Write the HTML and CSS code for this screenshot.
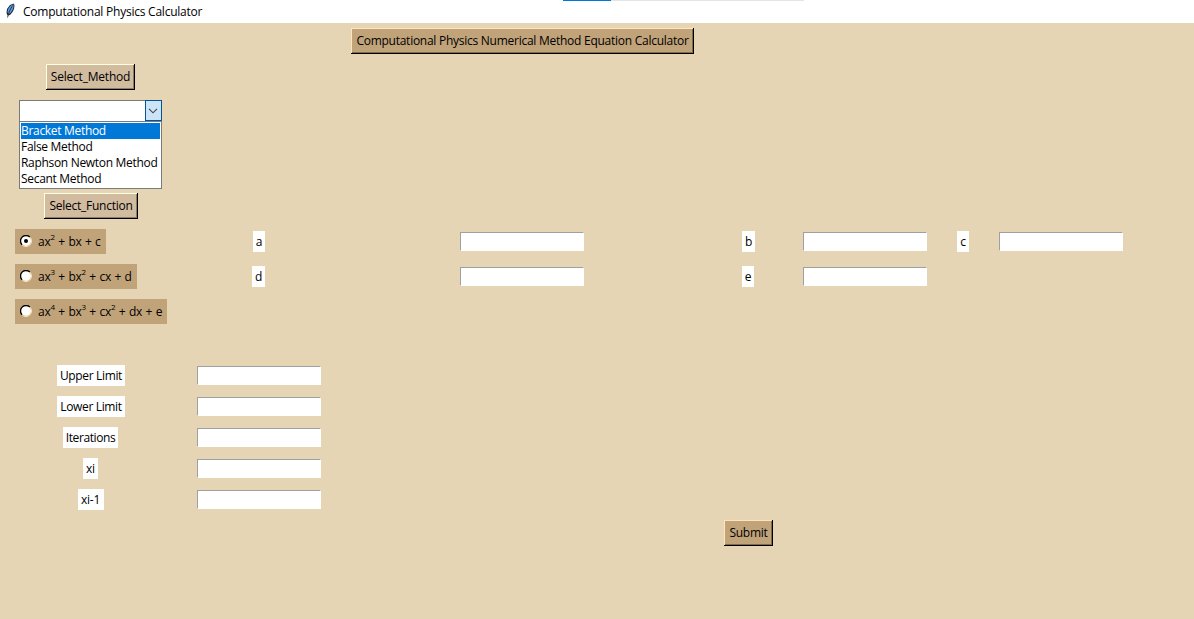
FILE: index.html
```html
<!DOCTYPE html>
<html lang="en">
<head>
<meta charset="utf-8">
<title>Computational Physics Calculator</title>
<link rel="stylesheet" href="styles.css">
</head>
<body>
<header class="titlebar">
  <svg class="feather" width="10" height="16" viewBox="0 0 10 16">
    <path d="M8.5 .5L9.5 2L9 6L7.5 9L5 12L2.5 12.5L1.5 10L2 6L5 2Z" fill="#1c2730"/>
    <path d="M8.3 1.2L8.6 3L8 6L6 9.3L3.5 11.5L2.5 9L3.2 6L5.5 2.7Z" fill="#5c9be0"/>
    <path d="M7.5 2.5L4.5 8L2.5 14.5" fill="none" stroke="#16202a" stroke-width=".8"/>
  </svg>
  <span class="caption">Computational Physics Calculator</span>
  <span class="progress"><span class="progress-fill"></span></span>
</header>
<main class="form">
  <button class="btn heading">Computational Physics Numerical Method Equation Calculator</button>
  <button class="btn light method">Select_Method</button>
  <div class="combo">
    <div class="field"><span class="arrow"><svg width="10" height="6" viewBox="0 0 10 6"><path d="M1 .8L5 4.8L9 .8" fill="none" stroke="#444" stroke-width="1.1"/></svg></span></div>
    <ul class="list">
      <li class="selected">Bracket Method</li>
      <li>False Method</li>
      <li>Raphson Newton Method</li>
      <li>Secant Method</li>
    </ul>
  </div>
  <button class="btn light function">Select_Function</button>

  <div class="radio r5 w1"><svg class="dot" width="12" height="12" viewBox="0 0 12 12"><circle cx="6" cy="6" r="5" fill="#fff"/><path d="M2.1 9.9A5.5 5.5 0 0 1 9.9 2.1" fill="none" stroke="#000" stroke-width="1.3"/><path d="M9.9 2.1A5.5 5.5 0 0 1 2.1 9.9" fill="none" stroke="#ffe2b4" stroke-width="1"/><circle cx="6" cy="6" r="2" fill="#000"/></svg><span>ax<sup>2</sup> + bx + c</span></div>
  <div class="radio r6 w2"><svg class="dot" width="12" height="12" viewBox="0 0 12 12"><circle cx="6" cy="6" r="5" fill="#fff"/><path d="M2.1 9.9A5.5 5.5 0 0 1 9.9 2.1" fill="none" stroke="#000" stroke-width="1.3"/><path d="M9.9 2.1A5.5 5.5 0 0 1 2.1 9.9" fill="none" stroke="#ffe2b4" stroke-width="1"/></svg><span>ax<sup>3</sup> + bx<sup>2</sup> + cx + d</span></div>
  <div class="radio r7 w3"><svg class="dot" width="12" height="12" viewBox="0 0 12 12"><circle cx="6" cy="6" r="5" fill="#fff"/><path d="M2.1 9.9A5.5 5.5 0 0 1 9.9 2.1" fill="none" stroke="#000" stroke-width="1.3"/><path d="M9.9 2.1A5.5 5.5 0 0 1 2.1 9.9" fill="none" stroke="#ffe2b4" stroke-width="1"/></svg><span>ax<sup>4</sup> + bx<sup>3</sup> + cx<sup>2</sup> + dx + e</span></div>

  <span class="label r5 c2 narrow">a</span><span class="entry r5 c3"></span>
  <span class="label r5 c4">b</span><span class="entry r5 c5"></span>
  <span class="label r5 c6 narrow">c</span><span class="entry r5 c7"></span>
  <span class="label r6 c2 d">d</span><span class="entry r6 c3"></span>
  <span class="label r6 c4 narrow e">e</span><span class="entry r6 c5"></span>

  <span class="label r9 c1 limit">Upper Limit</span><span class="entry r9 c2"></span>
  <span class="label r10 c1 limit">Lower Limit</span><span class="entry r10 c2"></span>
  <span class="label r11 c1 iterations">Iterations</span><span class="entry r11 c2"></span>
  <span class="label r12 c1 xi">xi</span><span class="entry r12 c2"></span>
  <span class="label r13 c1 xi-prev">xi-1</span><span class="entry r13 c2"></span>
  <button class="btn submit">Submit</button>
</main>
</body>
</html>
```

FILE: styles.css
```css
* { box-sizing: border-box; }
body {
  margin: 0;
  width: 1194px;
  height: 619px;
  overflow: hidden;
  background: #e6d5b5;
  color: #000;
  font: 12px/16px "Open Sans", "Noto Sans", sans-serif;
  letter-spacing: -0.26px;
  white-space: nowrap;
}
.titlebar {
  position: relative;
  display: flex;
  height: 23px;
  padding: 3px 0 0 5px;
  background: #fff;
}
.feather { flex: none; margin-right: 8px; }
.caption { padding-top: 1px; letter-spacing: -0.23px; }
.progress {
  position: absolute;
  top: 0;
  left: 563px;
  width: 241px;
  height: 1px;
  background: #e5e5e5;
}
.progress-fill { display: block; width: 48px; height: 1px; background: #0078d7; }
.form {
  display: grid;
  grid-template-columns: 181px 156px 371px 81px 152px 44px 152px;
  grid-template-rows: 36px 36px 93px 36px 35px 35px 35px 31px repeat(5, 31px) 36px;
  place-items: center;
}
.btn {
  height: 26px;
  padding: 0;
  border: 0;
  background: #c1a37a;
  box-shadow: inset -1px -1px #000, inset 1px 1px #ffe5b9, inset -2px -2px #826c50;
  color: #000;
  font: inherit;
  letter-spacing: inherit;
}
.light {
  background: #d2bc9f;
  box-shadow: inset -1px -1px #000, inset 1px 1px #ffffe0, inset -2px -2px #8c7d6a;
}
.heading { grid-area: 1 / 3; width: 343px; }
.method { grid-area: 2 / 1; width: 89px; letter-spacing: -0.2px; }
.function { grid-area: 4 / 1; width: 94px; margin-left: 1px; }
.submit { grid-area: 14 / 4; width: 49px; }
.combo { grid-area: 3 / 1; align-self: start; width: 143px; margin-top: 5px; }
.field {
  display: flex;
  justify-content: flex-end;
  height: 21px;
  border: 1px solid #7a7a7a;
  border-bottom: 0;
  background: #fff;
}
.arrow {
  display: grid;
  justify-content: start;
  align-items: center;
  width: 17px;
  height: 21px;
  margin: -1px -1px 0 0;
  padding-left: 2px;
  border: 1px solid #005499;
  background: #cce4f7;
}
.list {
  height: 68px;
  margin: 0;
  padding: 1px;
  border: 1px solid #7a7a7a;
  background: #fff;
  list-style: none;
  letter-spacing: -0.31px;
}
.list li { height: 16px; line-height: 16px; }
.list .selected { background: #0078d7; color: #fff; }
.radio {
  grid-column: 1;
  justify-self: start;
  display: flex;
  align-items: center;
  height: 25px;
  margin-left: 15px;
  padding-left: 5px;
  background: #c1a37a;
  word-spacing: 0.65px;
}
.dot { flex: none; margin: 0 6px 2px 0; }
.radio sup { font-size: 8px; line-height: 0; vertical-align: 6px; }
.w1 { width: 91px; }
.w2 { width: 122px; }
.w3 { width: 152px; }
.label { width: 13px; height: 21px; background: #fff; text-align: center; line-height: 21px; }
.narrow { width: 12px; }
.d { margin-right: 1px; }
.e { margin-right: 1px; }
.limit { width: 68px; margin-left: 1px; letter-spacing: -0.35px; }
.iterations { width: 55px; letter-spacing: -0.4px; }
.xi { width: 15px; }
.xi-prev { width: 26px; }
.entry {
  width: 124px;
  height: 19px;
  background: #fff;
  border: 1px solid #fff;
  border-top-color: #a0a0a0;
  border-left-color: #a0a0a0;
}
.entry.c3 { margin-right: 1px; }
.r5 { grid-row: 5; } .r6 { grid-row: 6; } .r7 { grid-row: 7; }
.r9 { grid-row: 9; } .r10 { grid-row: 10; } .r11 { grid-row: 11; }
.r12 { grid-row: 12; } .r13 { grid-row: 13; }
.c1 { grid-column: 1; } .c2 { grid-column: 2; } .c3 { grid-column: 3; }
.c4 { grid-column: 4; } .c5 { grid-column: 5; } .c6 { grid-column: 6; }
.c7 { grid-column: 7; }
```
